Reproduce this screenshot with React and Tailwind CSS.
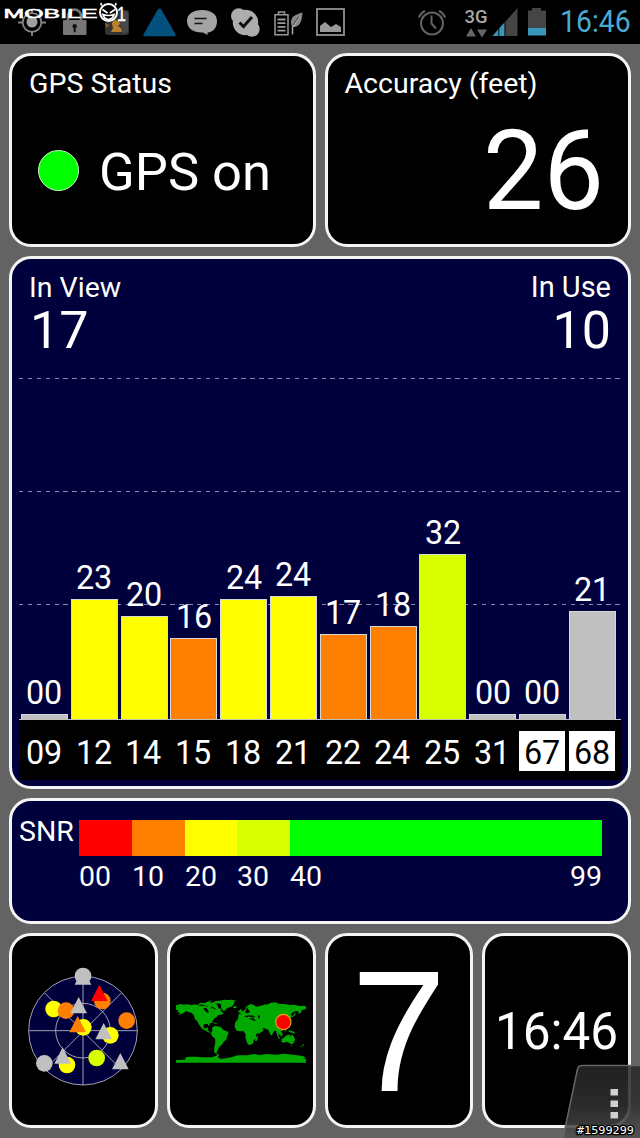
import clsx from 'clsx'

const satellites = [
  { id: '09', snr: '00', height: 5, color: 'bg-[#c0c0c0]' },
  { id: '12', snr: '23', height: 120, color: 'bg-[#ffff00]' },
  { id: '14', snr: '20', height: 103, color: 'bg-[#ffff00]' },
  { id: '15', snr: '16', height: 81, color: 'bg-[#ff8000]' },
  { id: '18', snr: '24', height: 120, color: 'bg-[#ffff00]' },
  { id: '21', snr: '24', height: 123, color: 'bg-[#ffff00]' },
  { id: '22', snr: '17', height: 85, color: 'bg-[#ff8000]' },
  { id: '24', snr: '18', height: 93, color: 'bg-[#ff8000]' },
  { id: '25', snr: '32', height: 165, color: 'bg-[#d8ff00]' },
  { id: '31', snr: '00', height: 5, color: 'bg-[#c0c0c0]' },
  { id: '67', snr: '00', height: 5, color: 'bg-[#c0c0c0]', glonass: true },
  { id: '68', snr: '21', height: 108, color: 'bg-[#c0c0c0]', glonass: true },
]

const snrScale = [
  { from: '00', width: 'w-[53px]', color: 'bg-[#ff0000]' },
  { from: '10', width: 'w-[53px]', color: 'bg-[#ff8000]' },
  { from: '20', width: 'w-[52px]', color: 'bg-[#ffff00]' },
  { from: '30', width: 'w-[53px]', color: 'bg-[#d8ff00]' },
  { from: '40', to: '99', width: 'w-[312px]', color: 'bg-[#00ff00]' },
]

// Sky plot markers, painted in order
const skyMarkers = [
  { type: 'circle', x: 249, y: 153, color: '#c0c0c0' },
  { type: 'triangle', x: 249, y: 155, color: '#c0c0c0' },
  { type: 'circle', x: 161, y: 252, color: '#ffff00' },
  { type: 'circle', x: 198, y: 257, color: '#ff8000' },
  { type: 'circle', x: 307, y: 228, color: '#ff8000' },
  { type: 'circle', x: 380, y: 287, color: '#ff8000' },
  { type: 'circle', x: 250, y: 307, color: '#ffff00' },
  { type: 'circle', x: 331, y: 331, color: '#ffff00' },
  { type: 'circle', x: 290, y: 399, color: '#d8ff00' },
  { type: 'circle', x: 201, y: 420, color: '#ffff00' },
  { type: 'circle', x: 133, y: 415, color: '#c0c0c0' },
  { type: 'triangle', x: 298, y: 204, color: '#ff0000' },
  { type: 'triangle', x: 236, y: 241, color: '#c0c0c0' },
  { type: 'triangle', x: 233, y: 298, color: '#ff8000' },
  { type: 'triangle', x: 311, y: 319, color: '#c0c0c0' },
  { type: 'triangle', x: 188, y: 392, color: '#c0c0c0' },
  { type: 'triangle', x: 361, y: 409, color: '#c0c0c0' },
]

const Card = ({ className, children }) => (
  <section className={clsx('rounded-[22px] border-3 border-[#f4f4f4] overflow-hidden', className)}>
    {children}
  </section>
)

const StatusBar = () => (
  <header className="h-11 shrink-0 bg-black flex items-center">
    <svg className="shrink-0" width="550" height="44" viewBox="0 0 550 44">
      {/* Location */}
      <g stroke="#858585" fill="none" strokeWidth="1.8">
        <circle cx="32" cy="22.5" r="9.3" />
        <path d="M32 9v5M32 31v5M18 22.5h5M41 22.5h5" />
        <circle cx="32" cy="22" r="5.5" fill="#a0a0a0" stroke="none" />
      </g>
      {/* Lock */}
      <path d="M68 21v-5a6.5 6.5 0 0 1 13 0v5" fill="none" stroke="#777" strokeWidth="2.6" />
      <rect x="63" y="20" width="23.5" height="15" rx="1" fill="#777" />
      <path d="M74.700 24a2.200 2.200 0 0 1 1 4.200v4h-2v-4a2.200 2.200 0 0 1 1-4.200z" fill="#111" />
      {/* App with a golden figure */}
      <rect x="105" y="10" width="24" height="25" rx="3" fill="#333" />
      <path d="M121 11l7 1v20l-5 2-3-10z" fill="#484848" />
      <path d="M112 23l2-3 5 1 1 3-2 2 3 2 1 4h-11l2-4-1-4z" fill="#b9822c" />
      <path d="M105 23l5 2-4 3z" fill="#7c5824" />
      {/* Warning triangle */}
      <path d="M159.500 8.500q1.200 0 2 1.200l14 24.500q.8 2-1.500 2h-29q-2.200 0-1.400-2l14-24.500q.8-1.200 1.900-1.200z" fill="#04517f" />
      {/* Message */}
      <path d="M202 10c9 0 15 4 15 11s-4 11-9.500 11.500V35l-4.500-2.500h-1c-9 0-15-4.500-15-11.500s6-11 15-11z" fill="#a3a3a3" />
      <path d="M194.500 18.500h12M194.500 23.500h8" stroke="#111" strokeWidth="1.700" />
      {/* Skype */}
      <circle cx="245.500" cy="22.500" r="12.700" fill="#adadad" />
      <circle cx="238.700" cy="16" r="7.700" fill="#adadad" />
      <circle cx="252" cy="29" r="7.700" fill="#adadad" />
      <path d="M239.500 22.500l4 4 8.500-9.500" fill="none" stroke="#111" strokeWidth="3" />
      {/* Battery saver */}
      <g fill="none" stroke="#999" strokeWidth="1.500">
        <path d="M275 14.700h13v20h-13z" />
        <path d="M278.500 14v-2h6v2" />
        <path d="M277.500 19.500h8M277.500 23.200h8M277.500 26.900h8M277.500 30.700h8" strokeWidth="1.800" />
      </g>
      <path d="M302.500 12.500c-8 2-11.500 5-11.500 9.500 0 3.500 1 5 3 5 5 0 8-5 8.500-14.500z" fill="#888" />
      <path d="M300 16l-7.500 11v7.500" fill="none" stroke="#aaa" strokeWidth="1.500" />
      <path d="M299 16.500l-6 8.500" stroke="#222" strokeWidth=".8" />
      {/* Gallery */}
      <rect x="317" y="9" width="27" height="26" fill="none" stroke="#8a8a8a" strokeWidth="1.900" />
      <path d="M320 32v-6l5-4 6 5 5-3 5 3v5z" fill="#999" />
      {/* Alarm */}
      <g fill="none" stroke="#626262" strokeWidth="2">
        <circle cx="432" cy="23.500" r="11" />
        <path d="M431.500 15.500v8l4.500 5" />
        <path d="M418.800 17.500q1.700-4.500 6.200-6.700M445.200 17.500q-1.700-4.500-6.200-6.700" />
      </g>
      {/* Data arrows */}
      <path d="M466 36.500h10l-5-8.500zM477 29.500h10l-5 8z" fill="#666" />
      <text x="464.500" y="22.500" textLength="23" lengthAdjust="spacingAndGlyphs" fill="#a8a8a8" className="font-['Roboto',sans-serif] text-[19px] font-medium">3G</text>
      {/* Signal */}
      <path d="M492.500 36L517.500 8v28z" fill="#454545" />
      <path d="M492.500 36l12-13.500V36z" fill="#3798bb" />
      <path d="M498.800 27v9M505 22v14" stroke="#111" strokeWidth="1" />
      {/* Battery */}
      <path d="M528 10.500h4V8h9v2.500h5V35h-18z" fill="#454545" />
      <path d="M528 28h18v7.500h-18z" fill="#3798bb" />
      {/* Brand mark */}
      <text x="3.500" y="17.500" textLength="94" lengthAdjust="spacingAndGlyphs" fill="#fff" stroke="#fff" strokeWidth=".6" className="font-['Liberation_Sans',sans-serif] text-[13px]">MOBILE</text>
      <text x="117" y="20.500" textLength="9" lengthAdjust="spacingAndGlyphs" fill="#fff" stroke="#fff" strokeWidth=".4" className="font-['Liberation_Sans',sans-serif] text-[21px]">1</text>
      <circle cx="108.500" cy="12.500" r="8.500" fill="#000" stroke="#fff" strokeWidth="2" />
      <path d="M101.500 5.500L101 3M115.500 5.500L116 3M102.500 9.500l5 3.500M115 9.500l-5 3.500M103 14.500q5.500 2 11 0-1.500 5-5.500 5t-5.500-5z" fill="none" stroke="#fff" strokeWidth="1.700" />
    </svg>
    <span className="ml-[9.500px] origin-left scale-x-[.93] text-[30.500px] leading-none text-[#4aa9d0]">16:46</span>
  </header>
)

const SkyPlot = () => (
  <svg width="120" height="122" viewBox="69 120 360 366">
    <circle cx="249" cy="317" r="163" fill="#00003c" />
    <g fill="none" stroke="#b8b8c8" strokeWidth="2.600">
      <circle cx="249" cy="317" r="163" />
      <circle cx="249" cy="317" r="82" />
      <path d="M249 154v326M86 317h326M134 204l230 230M364 204L134 434" />
    </g>
    {skyMarkers.map((m, i) =>
      m.type === 'circle' ? (
        <circle key={i} cx={m.x} cy={m.y} r="25" fill={m.color} />
      ) : (
        <path key={i} d={`M${m.x} ${m.y - 25}l25 49h-50z`} fill={m.color} />
      )
    )}
  </svg>
)

const WorldMap = () => (
  <svg width="130" height="66" viewBox="48 40 390 198">
    <g fill="#00a800">
      {/* North America */}
      <path d="M48 62l15-4 8 2 10-1 14 2 10-2 18 5 10-1 8 3 6-4 6 2 2 8 9-5 7 6 10 1 4 8 7 4-8 4-9 1-5 6-5 3-7 8-3 6-5 1-3 10-5-7-8 0-4 4 2 9 7 0 3-3 3 2-2 6 4 4 2 4 6 0-2 3-8-4-8-5-9-4-6-7-6-9-4-8-8-8-2-10-7-7-9-3-8-2-12 7-10 4 4-6-8-4 4-4-8-2z" />
      <path d="M112 60l9-6 12 2 14-7 8-2-7 7 12-1 12 8 4 10 9 5-6 6-8-7-7-6-7-2-10-4-9 1-10-4z" />
      {/* Greenland */}
      <path d="M158 55l8-6 13-1 14-3 13 1 12-1 8 3-3 5-3 8-6 5-11 3-6 6-4 4-6-3-4-8 1-8-8-4-8 1z" />
      <path d="M219 66l9-2 3 3-5 4-6-1zM137 107l13 1 9 6-7 0-9-4zM159 113l8 1 6 2-10 1z" />
      {/* South America */}
      <path d="M156 129l8-5 9 1 10 3 7 7 13 6 3 5-4 8-3 11-8 6-4 8-7 6-4 4-2 7-4 5 2 6-7-1-3-7 1-12 3-13-1-12-9-8-3-8 4-7z" />
      {/* Europe and Asia */}
      <path d="M235 98l0-9 9 0-2-6 8-5 6-3 1-7 7-6 9-4 8 3 9 5 7-2 12-2 6-3 5 1 13-6 14-1 10 5 18 0 14 3 13-1 17 4 14-1 10 5-5 5-12 3-3 7-6 6-3-10-7 1-9 3-5 5 3 7-6 8-5 1 1 7-4 2-4-5-3 4 4 8-3 7-7 6-7 2 2 7 4 9-4 5-4-6-5-4 1 9 5 8-4 0-6-11-2-12-6-2-8 14-3 0-7-16-11-5-8-1 6 5-7 7-11 6-9-17-2-6-11 0-3-6-8 1-2 4-6-9-6-2-5 6-8 4-6 0z" />
      <path d="M238 84l3-10 3-2 2 10 3 4-9 1zM235 77l4 0 0 5-4 1zM395 95l6-4 3-7 3 0-2 8-7 6zM405 76l3-8 2 8z" />
      {/* Africa */}
      <path d="M229 108l8-7 15-2 6 6 12 0 10 2 7 15 6 8 11-1-8 12-8 9 1 11-8 6-1 8-6 5-9 0-4-6-5-16 1-9-5-6-1-4-11 1-10-2-6-10 1-12z" />
      <path d="M288 159l5-7 1 5-4 12-5 0z" />
      {/* South-east Asia and Oceania */}
      <path d="M343 125l9 8 6 10-5-1-9-11zM362 130l8-5 3 5-5 9-7-1zM356 144l17 3-5 2zM375 134l5 1-3 8zM385 137l15 3 7 7-9-1-8-4-5-2z" />
      <path d="M364 164l9-6 8-7 9-1 1 6 5-7 6 8 3 8-4 10-6 4-7-4-7-4-11 3-5-1z" />
      <path d="M392 181l4 0-2 5zM427 178l6 2-5 5zM422 183l5 1-7 4z" />
      {/* Antarctica */}
      <path d="M48 234v-8l27-1 3-8 12-1 20 0 18 2 28 0 13-5 4-6 4 2-3 10 10 4 29-5 20-6 28 0 20-4 20 3 18-3 30 2 23-3 34 4 23 3 8 5-5 4 19 3v8z" />
    </g>
    <g fill="#000">
      <path d="M130 71l8-2 4 5 5 8-5 3-9-9zM255 85l5-14 5-5-1 8 6 7-6 5zM253 95l12-3 16 1 5 5-14 0-5-3-4 3-7-1zM294 91l5 2 0 10-5-4z" />
      <path d="M266 102l14-2 8 10-5-2zM159 67l9 5-5 2z" />
    </g>
    <circle cx="370" cy="112" r="23" fill="#ff0000" stroke="#e8a31c" strokeWidth="3.500" />
  </svg>
)

const SignalChart = () => (
  <Card className="h-[533px] bg-[#00003c] relative">
    <div className="flex justify-between px-[17px]">
      <div>
        <p className="mt-[15px] text-[28.500px] leading-7">In View</p>
        <p className="mt-[3px] ml-[1px] text-[52px] leading-[52px]">17</p>
      </div>
      <div className="text-right">
        <p className="mt-[14px] text-[29px] leading-7">In Use</p>
        <p className="mt-1 text-[52px] leading-[52px]">10</p>
      </div>
    </div>

    {/* Grid lines behind the bars */}
    <div className="absolute top-[119px] left-[7px] w-[602px] flex flex-col gap-[112px] *:h-px *:bg-[repeating-linear-gradient(90deg,#8888a8_0_4.5px,transparent_4.5px_8.9px)]">
      <div></div>
      <div></div>
      <div></div>
    </div>

    <div className="absolute left-[7px] bottom-[6px] w-[602px]">
      <div className="flex items-end gap-[2.800px] pl-[2px] border-b border-[#c0c0c0]">
        {satellites.map((s) => (
          <div key={s.id} className="w-[47px] text-center">
            <p className="mb-[5px] text-[34px] leading-[34px]">
              <span className="inline-block scale-x-[.95]">{s.snr}</span>
            </p>
            <div
              className={clsx('border border-b-0 border-[#d8d8d8]', s.color)}
              style={{ height: s.height }}
            ></div>
          </div>
        ))}
      </div>
      <div className="h-[60px] bg-black flex items-start gap-[3.800px] pt-[11px] pl-[2px]">
        {satellites.map((s) => (
          <span
            key={s.id}
            className={clsx(
              'w-[46px] h-10 text-[34px] leading-[42px] text-center',
              s.glonass && 'bg-white text-black'
            )}
          >
            <span className="inline-block scale-x-[.95]">{s.id}</span>
          </span>
        ))}
      </div>
    </div>
  </Card>
)

const SnrLegend = () => (
  <Card className="h-[126px] bg-[#00003c] flex pl-[7px] pt-[19px] text-[28.500px] leading-7">
    <p className="w-[60px] shrink-0 mt-[-2px]">SNR</p>
    {snrScale.map((s) => (
      <div key={s.from} className={clsx('shrink-0', s.width)}>
        <div className={clsx('h-9', s.color)}></div>
        <div className="mt-[7px] flex justify-between">
          <span>{s.from}</span>
          <span>{s.to}</span>
        </div>
      </div>
    ))}
  </Card>
)

const MenuCorner = () => (
  <div className="absolute right-0 bottom-0">
    <svg width="80" height="74" viewBox="0 0 80 74">
      <defs>
        <linearGradient id="menuShade" x1="0" y1="0" x2="0" y2="1">
          <stop offset="0" stopColor="#262626" stopOpacity=".85" />
          <stop offset=".55" stopColor="#303030" stopOpacity=".88" />
          <stop offset="1" stopColor="#505050" stopOpacity=".85" />
        </linearGradient>
      </defs>
      <path d="M3 74L17.500 5q1-3.500 5-3.500H80V74z" fill="url(#menuShade)" />
      <path d="M3 74L17.500 5q1-3.500 5-3.500H80" fill="none" stroke="#666" strokeWidth="1.500" />
      <path d="M50.500 25h7.500v6.500h-7.500zM50.500 36.500h7.500v6.500h-7.500zM50.500 48h7.500v6.500h-7.500z" fill="#d0d0d0" />
      <text x="17" y="70" textLength="57" lengthAdjust="spacingAndGlyphs" fill="#fff" stroke="#000" strokeWidth="2.500" paintOrder="stroke" className="font-['DejaVu_Sans_Mono',monospace] text-[11px]">#1599299</text>
    </svg>
  </div>
)

const App = () => {
  return (
    <div className="relative w-[640px] h-[1138px] overflow-hidden bg-[#636363] text-white font-['Roboto',sans-serif] flex flex-col">
      <StatusBar />
      <main className="p-[9px] flex flex-col gap-[9px]">
        <div className="grid grid-cols-2 gap-[9px]">
          <Card className="h-[194px] bg-black px-[17px]">
            <h2 className="mt-[14px] text-[28.500px] leading-7">GPS Status</h2>
            <div className="mt-[45px] pl-[9px] flex items-center gap-[20px]">
              <span className="size-[41px] rounded-full bg-[#00ff00] border border-[#c8f8c8]"></span>
              <span className="mt-[3px] text-[52.500px] leading-[52px]">GPS on</span>
            </div>
          </Card>
          <Card className="h-[194px] bg-black px-[17px]">
            <h2 className="mt-[14px] text-[28.500px] leading-7">Accuracy (feet)</h2>
            <p className="mt-[17px] mr-[7px] text-right text-[112px] leading-[112px]">
              <span className="inline-block origin-right scale-x-[.96]">26</span>
            </p>
          </Card>
        </div>
        <SignalChart />
        <SnrLegend />
        <div className="grid grid-cols-4 gap-[9px]">
          <Card className="h-[195px] bg-black flex justify-center pt-[29px]">
            <SkyPlot />
          </Card>
          <Card className="h-[195px] bg-black flex justify-center pt-[62px]">
            <WorldMap />
          </Card>
          <Card className="h-[195px] bg-black flex items-center justify-center">
            <span className="font-['Liberation_Sans',sans-serif] text-[172px] leading-none">7</span>
          </Card>
          <Card className="h-[195px] bg-black flex items-center justify-center pt-[2px]">
            <span className="text-[51px] leading-none scale-x-[.97]">16:46</span>
          </Card>
        </div>
      </main>
      <MenuCorner />
    </div>
  )
}

export default App
